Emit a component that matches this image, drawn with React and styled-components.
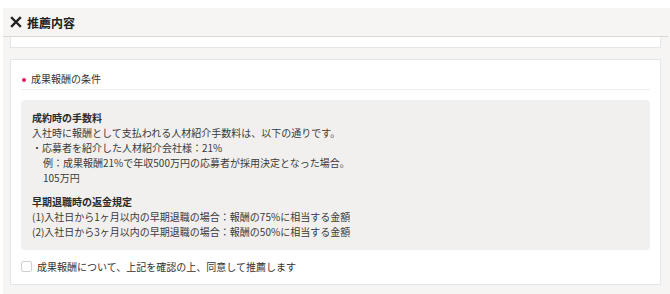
import React, { useState } from "react";
import styled, { createGlobalStyle } from "styled-components";

const GlobalStyle = createGlobalStyle`
  html, body {
    margin: 0;
    padding: 0;
    background: #ffffff;
  }
  body {
    font-family: "Noto Sans CJK JP", "Noto Sans", sans-serif;
    color: #333333;
  }
`;

const Page = styled.div`
  width: 670px;
  height: 294px;
  overflow: hidden;
  padding: 8px 0 0 3px;
  box-sizing: border-box;
  background: #ffffff;
`;

const Modal = styled.div`
  height: 100%;
  background: #f6f5f3;
  display: flex;
  flex-direction: column;
`;

const Header = styled.div`
  height: 29px;
  flex: none;
  display: flex;
  align-items: center;
  gap: 5px;
  padding-left: 7px;
  border-bottom: 1px solid #d9d8d6;
  box-sizing: border-box;
  margin-right: 2px;
`;

const HeaderTitle = styled.h1`
  margin: 0;
  font-size: 12px;
  font-weight: 700;
  color: #222222;
`;

const Body = styled.div`
  flex: 1;
  display: flex;
  flex-direction: column;
  gap: 11px;
  padding: 0 9px 0 7px;
`;

const Card = styled.section`
  background: #ffffff;
  border: 1px solid #e4e6ea;
  border-top: ${(p) => (p.$cut ? "none" : "1px solid #e4e6ea")};
  height: ${(p) => (p.$cut ? "10px" : "auto")};
  padding: ${(p) => (p.$cut ? "0" : "10px 10px 10px 10px")};
`;

const SectionTitle = styled.div`
  display: flex;
  align-items: center;
  gap: 5px;
  height: 17px;
  padding-left: 1px;
  padding-bottom: 2px;
  font-size: 10px;
  color: #333333;
  border-bottom: 1px solid #eeeeee;
`;

const Dot = styled.span`
  width: 4px;
  height: 4px;
  border-radius: 50%;
  background: #e8175d;
  margin-top: 3px;
`;

const InfoBox = styled.div`
  margin-top: 10px;
  background: #f1f0ee;
  border-radius: 4px;
  padding: 10px 11px 11px 11px;
  display: flex;
  flex-direction: column;
  gap: 9px;
`;

const Block = styled.div`
  font-size: 10px;
  line-height: 15px;
  color: #3a3a3a;
`;

const BlockTitle = styled.div`
  font-weight: 700;
  color: #2a2a2a;
`;

const Line = styled.div`
  padding-left: ${(p) => (p.$indent ? "11px" : "0")};
  white-space: nowrap;
`;

const CheckRow = styled.label`
  display: flex;
  align-items: center;
  gap: 5px;
  margin-top: 9px;
  font-size: 10px;
  line-height: 15px;
  color: #333333;
  cursor: pointer;
`;

const Box = styled.span`
  width: 9px;
  height: 9px;
  border: 1px solid #d0d0d0;
  border-radius: 2px;
  background: ${(p) => (p.$on ? "#e8175d" : "#ffffff")};
`;

function CloseIcon() {
  return (
    <svg width="12" height="12" viewBox="0 0 12 12">
      <path
        d="M2 2 L10 10 M10 2 L2 10"
        stroke="#222"
        strokeWidth="2.4"
        strokeLinecap="square"
      />
    </svg>
  );
}

export default function App() {
  const [agreed, setAgreed] = useState(false);

  return (
    <>
      <GlobalStyle />
      <Page>
        <Modal>
          <Header>
            <CloseIcon />
            <HeaderTitle>推薦内容</HeaderTitle>
          </Header>
          <Body>
            <Card $cut />
            <Card>
              <SectionTitle>
                <Dot />
                成果報酬の条件
              </SectionTitle>
              <InfoBox>
                <Block>
                  <BlockTitle>成約時の手数料</BlockTitle>
                  <Line>入社時に報酬として支払われる人材紹介手数料は、以下の通りです。</Line>
                  <Line>・応募者を紹介した人材紹介会社様：21%</Line>
                  <Line $indent>例：成果報酬21%で年収500万円の応募者が採用決定となった場合。</Line>
                  <Line $indent>105万円</Line>
                </Block>
                <Block>
                  <BlockTitle>早期退職時の返金規定</BlockTitle>
                  <Line>(1)入社日から1ヶ月以内の早期退職の場合：報酬の75%に相当する金額</Line>
                  <Line>(2)入社日から3ヶ月以内の早期退職の場合：報酬の50%に相当する金額</Line>
                </Block>
              </InfoBox>
              <CheckRow onClick={() => setAgreed(!agreed)}>
                <Box $on={agreed} />
                成果報酬について、上記を確認の上、同意して推薦します
              </CheckRow>
            </Card>
          </Body>
        </Modal>
      </Page>
    </>
  );
}
